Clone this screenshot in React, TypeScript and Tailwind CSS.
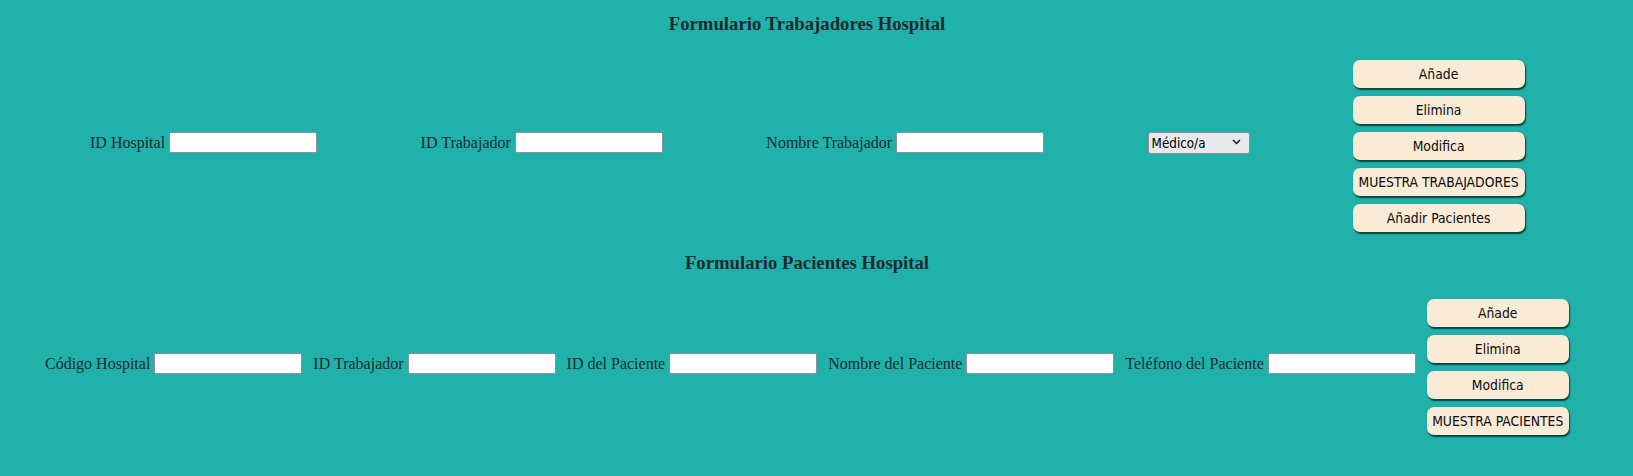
import React from "react";

const serif = "font-['Liberation_Serif','Times_New_Roman',serif]";

function Field({ label }: { label: string }) {
  return (
    <div className="flex items-center gap-[4px] mb-[7px] shrink-0">
      <span className="whitespace-nowrap leading-[18px]">{label}</span>
      <input
        type="text"
        className="w-[148px] h-[21px] bg-white border border-[#8f8f9d] rounded-[2px] px-[2px] text-[13px] outline-none"
      />
    </div>
  );
}

function Btn({ children, w }: { children: React.ReactNode; w: string }) {
  return (
    <button
      type="button"
      className={`${w} h-[28px] bg-[#faebd7] rounded-[7px] text-[13.8px] text-[#0a0a0a] font-['DejaVu_Sans_Condensed','DejaVu_Sans',sans-serif] [font-stretch:condensed] shadow-[1px_1.5px_1.5px_rgba(0,40,40,0.8)] flex items-center justify-center whitespace-nowrap`}
    >
      {children}
    </button>
  );
}

export default function App() {
  return (
    <div className={`min-h-[476px] w-full bg-[#20b2aa] ${serif} text-[16px] text-[#1c2a30] overflow-hidden`}>
      <div className="w-[1434px] ml-[90px] pt-[13px]">
        <h3 className="text-center font-bold text-[18.72px] leading-[22px]">
          Formulario Trabajadores Hospital
        </h3>
      </div>
      <div className="flex items-center gap-[103px] pl-[90px] mt-[25px]">
        <Field label="ID Hospital" />
        <div className="ml-[0.5px]"><Field label="ID Trabajador" /></div>
        <div className="ml-[0.5px]"><Field label="Nombre Trabajador" /></div>
        <div className="relative mb-[7px] shrink-0 ml-[0.5px]">
          <select className="appearance-none w-[102px] h-[22px] bg-[#e9e9ed] border border-[#8f8f9d] rounded-[3px] pl-[3px] text-[13.3px] text-black font-['DejaVu_Sans_Condensed','DejaVu_Sans',sans-serif] [font-stretch:condensed] outline-none">
            <option>Médico/a</option>
            <option>Enfermero/a</option>
          </select>
          <svg
            className="absolute right-[9px] top-[8px] pointer-events-none"
            width="9"
            height="6"
            viewBox="0 0 9 6"
          >
            <path d="M1 1 L4.5 4.5 L8 1" stroke="#111" strokeWidth="1.4" fill="none" />
          </svg>
        </div>
        <div className="flex flex-col gap-[8px] shrink-0">
          <Btn w="w-[172px]">Añade</Btn>
          <Btn w="w-[172px]">Elimina</Btn>
          <Btn w="w-[172px]">Modifica</Btn>
          <Btn w="w-[172px]">MUESTRA TRABAJADORES</Btn>
          <Btn w="w-[172px]">Añadir Pacientes</Btn>
        </div>
      </div>
      <div className="w-[1434px] ml-[90px] mt-[20px]">
        <h3 className="text-center font-bold text-[18.72px] leading-[22px]">
          Formulario Pacientes Hospital
        </h3>
      </div>
      <div className="flex items-center gap-[11px] pl-[45px] mt-[25px]">
        <Field label="Código Hospital" />
        <Field label="ID Trabajador" />
        <Field label="ID del Paciente" />
        <Field label="Nombre del Paciente" />
        <Field label="Teléfono del Paciente" />
        <div className="flex flex-col gap-[8px] shrink-0">
          <Btn w="w-[142px]">Añade</Btn>
          <Btn w="w-[142px]">Elimina</Btn>
          <Btn w="w-[142px]">Modifica</Btn>
          <Btn w="w-[142px]">MUESTRA PACIENTES</Btn>
        </div>
      </div>
    </div>
  );
}
